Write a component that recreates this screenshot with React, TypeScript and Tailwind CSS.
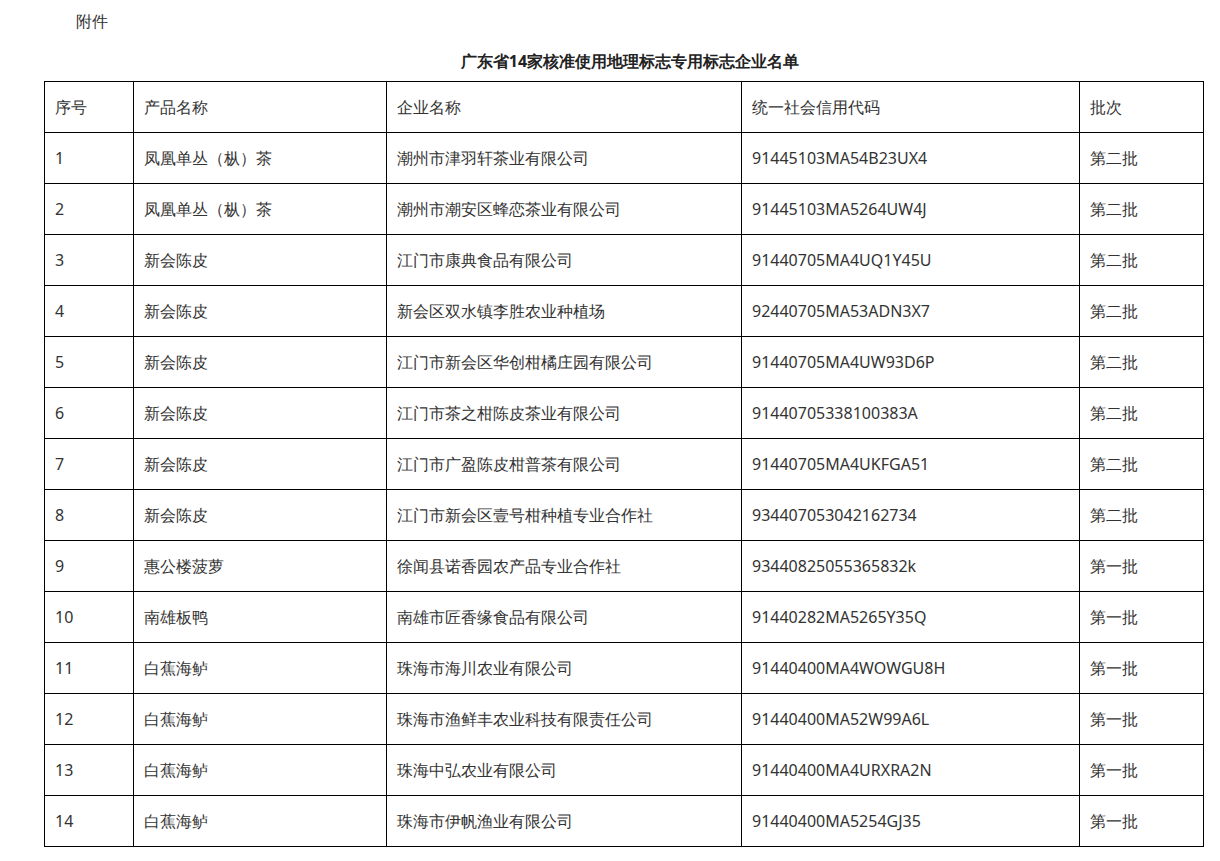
const rows: [string, string, string, string, string][] = [
  ["1", "凤凰单丛（枞）茶", "潮州市津羽轩茶业有限公司", "91445103MA54B23UX4", "第二批"],
  ["2", "凤凰单丛（枞）茶", "潮州市潮安区蜂恋茶业有限公司", "91445103MA5264UW4J", "第二批"],
  ["3", "新会陈皮", "江门市康典食品有限公司", "91440705MA4UQ1Y45U", "第二批"],
  ["4", "新会陈皮", "新会区双水镇李胜农业种植场", "92440705MA53ADN3X7", "第二批"],
  ["5", "新会陈皮", "江门市新会区华创柑橘庄园有限公司", "91440705MA4UW93D6P", "第二批"],
  ["6", "新会陈皮", "江门市茶之柑陈皮茶业有限公司", "91440705338100383A", "第二批"],
  ["7", "新会陈皮", "江门市广盈陈皮柑普茶有限公司", "91440705MA4UKFGA51", "第二批"],
  ["8", "新会陈皮", "江门市新会区壹号柑种植专业合作社", "934407053042162734", "第二批"],
  ["9", "惠公楼菠萝", "徐闻县诺香园农产品专业合作社", "93440825055365832k", "第一批"],
  ["10", "南雄板鸭", "南雄市匠香缘食品有限公司", "91440282MA5265Y35Q", "第一批"],
  ["11", "白蕉海鲈", "珠海市海川农业有限公司", "91440400MA4WOWGU8H", "第一批"],
  ["12", "白蕉海鲈", "珠海市渔鲜丰农业科技有限责任公司", "91440400MA52W99A6L", "第一批"],
  ["13", "白蕉海鲈", "珠海中弘农业有限公司", "91440400MA4URXRA2N", "第一批"],
  ["14", "白蕉海鲈", "珠海市伊帆渔业有限公司", "91440400MA5254GJ35", "第一批"],
];

const widths = ["w-[89px]", "w-[253px]", "w-[355px]", "w-[338px]", "w-[124px]"];

export default function App() {
  return (
    <div className="min-h-[861px] bg-white pt-[11px] text-[16px] text-[#333] [font-family:'Noto_Sans_CJK_SC',sans-serif]">
      <p className="ml-[76px] leading-[20px]">附件</p>
      <h1 className="mt-[20px] pl-[40px] text-center text-[16px] font-bold leading-[20px] text-[#222]">
        广东省14家核准使用地理标志专用标志企业名单
      </h1>
      <table className="ml-[44px] mt-[10px] table-fixed border-collapse">
        <thead>
          <tr className="h-[51px]">
            {["序号", "产品名称", "企业名称", "统一社会信用代码", "批次"].map((h, i) => (
              <th key={h} className={`${widths[i]} border border-black px-[10px] text-left font-normal`}>
                {h}
              </th>
            ))}
          </tr>
        </thead>
        <tbody>
          {rows.map((r) => (
            <tr key={r[0]} className="h-[51px]">
              {r.map((c, i) => (
                <td key={i} className="border border-black px-[10px]">
                  {c}
                </td>
              ))}
            </tr>
          ))}
        </tbody>
      </table>
    </div>
  );
}
